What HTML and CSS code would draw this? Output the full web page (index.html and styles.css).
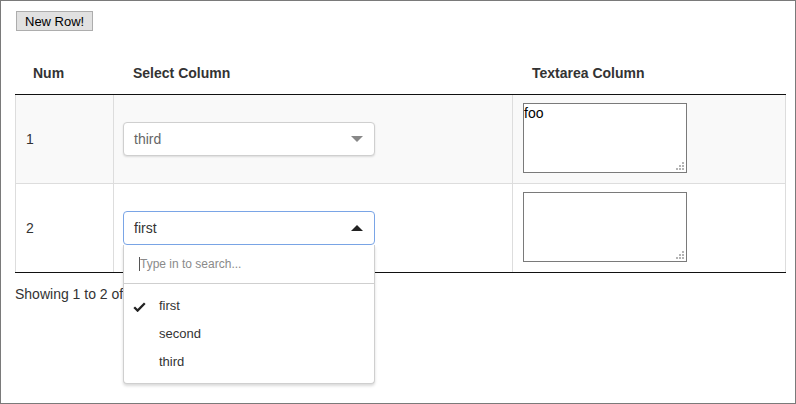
FILE: index.html
```html
<!DOCTYPE html>
<html>
<head>
<meta charset="utf-8">
<link rel="stylesheet" href="styles.css">
</head>
<body>
<div class="frame">
  <button class="btn" type="button">New Row!</button>
  <table class="grid">
    <thead>
      <tr>
        <th class="c1">Num</th>
        <th class="c2">Select Column</th>
        <th class="c3">Textarea Column</th>
      </tr>
    </thead>
    <tbody>
      <tr class="odd">
        <td class="first">1</td>
        <td>
          <div class="sel">
            <span class="sel-val muted">third</span>
            <svg class="caret" width="12" height="6" viewBox="0 0 12 6"><polygon points="0,0 12,0 6,6" fill="#888"/></svg>
          </div>
        </td>
        <td class="ta-cell">
          <div class="ta-wrap">
            <textarea class="ta">foo</textarea>
            <svg class="grip" width="8" height="8" viewBox="0 0 8 8"><g fill="#b4b4b4"><rect x="6" y="0" width="2" height="2"/><rect x="3" y="3" width="2" height="2"/><rect x="6" y="3" width="2" height="2"/><rect x="0" y="6" width="2" height="2"/><rect x="3" y="6" width="2" height="2"/><rect x="6" y="6" width="2" height="2"/></g></svg>
          </div>
        </td>
      </tr>
      <tr>
        <td class="first">2</td>
        <td>
          <div class="sel-wrap">
            <div class="sel open">
              <span class="sel-val">first</span>
              <svg class="caret" width="12" height="6" viewBox="0 0 12 6"><polygon points="0,6 12,6 6,0" fill="#222"/></svg>
            </div>
            <div class="dd">
              <div class="dd-search"><span class="cursor"></span><span class="ph">Type in to search...</span></div>
              <ul class="dd-list">
                <li class="dd-item selected">
                  <svg class="check" width="13" height="10" viewBox="0 0 13 10"><path d="M1.2 5.2 L4.6 8.6 L11.8 1.2" fill="none" stroke="#222" stroke-width="2.3"/></svg>
                  <span>first</span>
                </li>
                <li class="dd-item"><span>second</span></li>
                <li class="dd-item"><span>third</span></li>
              </ul>
            </div>
          </div>
        </td>
        <td class="ta-cell">
          <div class="ta-wrap">
            <textarea class="ta"></textarea>
            <svg class="grip" width="8" height="8" viewBox="0 0 8 8"><g fill="#b4b4b4"><rect x="6" y="0" width="2" height="2"/><rect x="3" y="3" width="2" height="2"/><rect x="6" y="3" width="2" height="2"/><rect x="0" y="6" width="2" height="2"/><rect x="3" y="6" width="2" height="2"/><rect x="6" y="6" width="2" height="2"/></g></svg>
          </div>
        </td>
      </tr>
    </tbody>
  </table>
  <div class="info">Showing 1 to 2 of</div>
</div>
</body>
</html>
```

FILE: styles.css
```css
html, body {
  margin: 0;
  padding: 0;
}
body {
  font-family: "Liberation Sans", Arial, sans-serif;
  font-size: 14px;
  color: #333;
  background: #fff;
}
.frame {
  box-sizing: border-box;
  width: 796px;
  height: 404px;
  border: 1px solid #7a7a7a;
  padding: 10px 0 0 14px;
  overflow: hidden;
}
.btn {
  display: block;
  box-sizing: border-box;
  height: 20px;
  margin: 0 0 0 1px;
  padding: 0 8px;
  font-family: "Liberation Sans", Arial, sans-serif;
  font-size: 13px;
  color: #000;
  background: #e1e1e1;
  border: 1px solid #adadad;
  border-radius: 0;
}
.grid {
  width: 771px;
  margin-top: 24px;
  table-layout: fixed;
  border-collapse: separate;
  border-spacing: 0;
  border-bottom: 1px solid #111;
}
.grid th {
  box-sizing: border-box;
  text-align: left;
  font-weight: bold;
  color: #333;
  line-height: 16px;
  padding: 10px 18px 13px 19px;
  border-bottom: 1px solid #111;
}
.grid th.c1 { width: 99px; padding-left: 18px; }
.grid th.c2 { width: 399px; }
.grid th.c3 { width: 273px; }
.grid td {
  height: 72px;
  padding: 8px 10px 8px 9px;
  vertical-align: middle;
  border-top: 1px solid #ddd;
  border-right: 1px solid #ddd;
  line-height: 16px;
  color: #333;
}
.grid td.first {
  border-left: 1px solid #ddd;
  padding-left: 10px;
}
.grid tbody tr:first-child td {
  border-top: none;
}
.grid tr.odd td {
  background: #f9f9f9;
}
.grid td.ta-cell {
  vertical-align: top;
  padding-left: 10px;
}
.ta-wrap {
  position: relative;
  width: 164px;
  height: 70px;
}
.ta {
  display: block;
  box-sizing: border-box;
  width: 164px;
  height: 70px;
  margin: 0;
  padding: 1px 0 0 0;
  font-family: "Liberation Sans", Arial, sans-serif;
  font-size: 14px;
  line-height: 16px;
  color: #000;
  background: #fff;
  border: 1px solid #7a7a7a;
  border-radius: 0;
  resize: none;
}
.grip {
  position: absolute;
  right: 3px;
  bottom: 3px;
}
.sel-wrap {
  position: relative;
  width: 252px;
}
.sel {
  box-sizing: border-box;
  width: 252px;
  height: 34px;
  display: flex;
  align-items: center;
  justify-content: space-between;
  padding: 0 11px 0 10px;
  background: #fff;
  border: 1px solid #cfcfcf;
  border-radius: 4px;
  box-shadow: 0 1px 2px rgba(0, 0, 0, 0.12);
}
.sel.open {
  border-color: #7aa5e6;
  box-shadow: none;
}
.sel-val {
  font-size: 14px;
  color: #333;
}
.sel-val.muted {
  color: #666;
}
.caret {
  display: block;
}
.dd {
  position: absolute;
  left: 0;
  top: 34px;
  box-sizing: border-box;
  width: 252px;
  background: #fff;
  border: 1px solid #cfcfcf;
  border-top: none;
  border-radius: 0 0 4px 4px;
  box-shadow: 0 2px 3px rgba(0, 0, 0, 0.15);
  z-index: 5;
}
.dd-search {
  height: 38px;
  display: flex;
  align-items: center;
  padding-left: 15px;
  border-bottom: 1px solid #cfcfcf;
  font-size: 12px;
}
.cursor {
  display: block;
  width: 1px;
  height: 14px;
  background: #555;
}
.ph {
  color: #8a8a8a;
}
.dd-list {
  list-style: none;
  margin: 0;
  padding: 8px 0 7px;
}
.dd-item {
  height: 28px;
  display: flex;
  align-items: center;
  padding-left: 35px;
  font-size: 13px;
  color: #333;
  position: relative;
}
.check {
  position: absolute;
  left: 9px;
  top: 10px;
}
.info {
  padding-top: 13px;
  line-height: 16px;
  font-size: 14px;
  color: #333;
}
```
